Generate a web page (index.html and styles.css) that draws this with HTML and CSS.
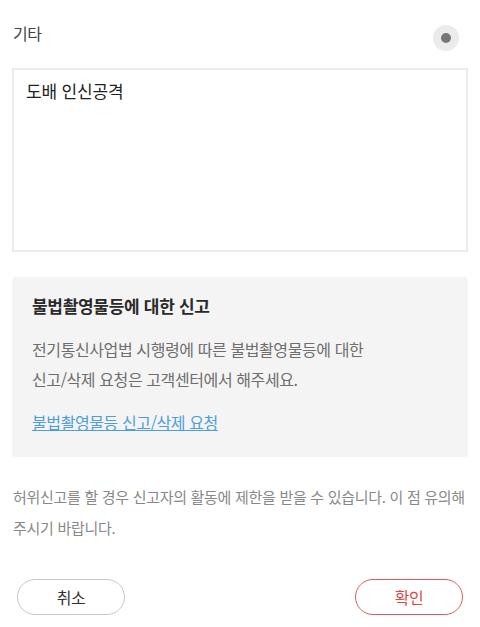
FILE: index.html
```html
<!DOCTYPE html>
<html lang="ko">
<head>
<meta charset="utf-8">
<link rel="stylesheet" href="styles.css">
</head>
<body>
<div class="page">
  <div class="option-row">
    <span class="option-label">기타</span>
    <span class="radio"><span class="radio-dot"></span></span>
  </div>
  <div class="textarea">도배 인신공격</div>
  <div class="notice">
    <div class="notice-title">불법촬영물등에 대한 신고</div>
    <p class="notice-body">전기통신사업법 시행령에 따른 불법촬영물등에 대한<br>신고/삭제 요청은 고객센터에서 해주세요.</p>
    <a class="notice-link" href="#">불법촬영물등 신고/삭제 요청</a>
  </div>
  <p class="warning">허위신고를 할 경우 신고자의 활동에 제한을 받을 수 있습니다. 이 점 유의해 주시기 바랍니다.</p>
  <div class="actions">
    <button class="btn btn-cancel">취소</button>
    <button class="btn btn-ok">확인</button>
  </div>
</div>
</body>
</html>
```

FILE: styles.css
```css
* { box-sizing: border-box; }
html, body { margin: 0; padding: 0; background: #fff; }
body {
  font-family: "Noto Sans CJK KR", "Noto Sans", sans-serif;
  color: #222;
}
.page {
  padding: 0 12px;
}
.option-row {
  display: flex;
  align-items: flex-start;
  justify-content: space-between;
  height: 68px;
  padding: 23px 9px 0 1px;
}
.option-label {
  font-size: 16px;
  line-height: 20px;
  color: #444;
  letter-spacing: -0.5px;
}
.radio {
  margin-top: 2px;
  width: 26px;
  height: 26px;
  border-radius: 50%;
  background: #ebebeb;
  display: flex;
  align-items: center;
  justify-content: center;
}
.radio-dot {
  width: 10px;
  height: 10px;
  border-radius: 50%;
  background: #767676;
}
.textarea {
  height: 184px;
  border: 2px solid #ececec;
  padding: 8px 12px;
  font-size: 17px;
  line-height: 26px;
  color: #222;
  letter-spacing: -0.15px;
}
.notice {
  margin-top: 25px;
  background: #f4f4f4;
  border-radius: 4px;
  padding: 14px 20px 20px 20px;
}
.notice-title {
  font-size: 17px;
  font-weight: 700;
  color: #2a2a2a;
  letter-spacing: -0.3px;
  line-height: 30px;
}
.notice-body {
  margin: 13px 0 0 0;
  font-size: 16px;
  line-height: 30px;
  color: #6e6e6e;
  letter-spacing: -0.4px;
}
.notice-link {
  display: inline-block;
  margin-top: 13px;
  font-size: 16px;
  line-height: 30px;
  color: #4d9de0;
  letter-spacing: -0.4px;
  text-decoration: underline;
}
.warning {
  margin: 24px 0 0 1px;
  font-size: 15px;
  line-height: 31px;
  color: #888;
  letter-spacing: -0.3px;
}
.actions {
  display: flex;
  justify-content: space-between;
  padding: 0 5px;
  margin-top: 36px;
}
.btn {
  width: 108px;
  height: 36px;
  border-radius: 18px;
  background: #fff;
  font-family: inherit;
  font-size: 16px;
  letter-spacing: -0.5px;
  cursor: pointer;
}
.btn-cancel {
  border: 1.5px solid #c8c8c8;
  color: #333;
}
.btn-ok {
  border: 1.5px solid #e05a5a;
  color: #e04848;
}
```
